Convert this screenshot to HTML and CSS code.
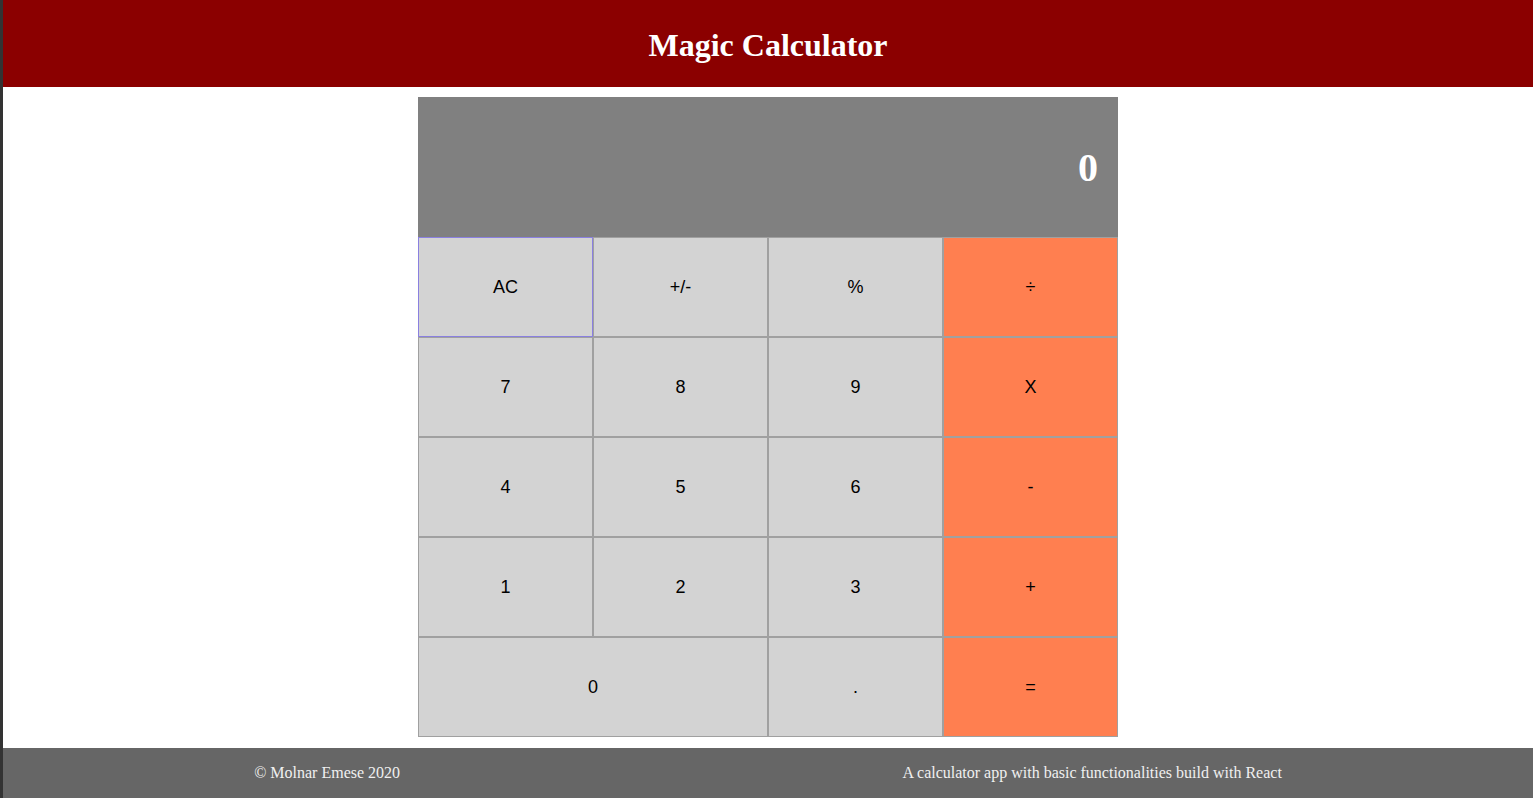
FILE: index.html
```html
<!DOCTYPE html>
<html lang="en">
<head>
<meta charset="utf-8">
<title>Magic Calculator</title>
<link rel="stylesheet" href="styles.css">
</head>
<body>
<div class="page">
  <header class="header">
    <h1 class="title">Magic Calculator</h1>
  </header>
  <main class="main">
    <div class="calculator">
      <div class="display">0</div>
      <div class="keys">
        <button class="key key-focus">AC</button>
        <button class="key">+/-</button>
        <button class="key">%</button>
        <button class="key key-op">÷</button>
        <button class="key">7</button>
        <button class="key">8</button>
        <button class="key">9</button>
        <button class="key key-op">X</button>
        <button class="key">4</button>
        <button class="key">5</button>
        <button class="key">6</button>
        <button class="key key-op">-</button>
        <button class="key">1</button>
        <button class="key">2</button>
        <button class="key">3</button>
        <button class="key key-op">+</button>
        <button class="key key-wide">0</button>
        <button class="key">.</button>
        <button class="key key-op">=</button>
      </div>
    </div>
  </main>
  <footer class="footer">
    <span class="footer-text">© Molnar Emese 2020</span>
    <span class="footer-text">A calculator app with basic functionalities build with React</span>
  </footer>
</div>
</body>
</html>
```

FILE: styles.css
```css
html, body {
  margin: 0;
  padding: 0;
  height: 100%;
}

body {
  background: #333333;
  font-family: "Liberation Serif", "Times New Roman", serif;
}

.page {
  margin-left: 3px;
  background: #ffffff;
  min-height: 100%;
  display: flex;
  flex-direction: column;
}

.header {
  background: #8b0000;
  height: 87px;
  display: flex;
  align-items: center;
  justify-content: center;
}

.title {
  margin: 0;
  padding-top: 2px;
  color: #ffffff;
  font-size: 32px;
  font-weight: bold;
  line-height: 1;
}

.main {
  display: flex;
  justify-content: center;
  padding: 10px 0 11px;
}

.calculator {
  width: 700px;
}

.display {
  height: 140px;
  background: #808080;
  color: #ffffff;
  font-family: "Liberation Serif", "Times New Roman", serif;
  font-weight: bold;
  font-size: 40px;
  display: flex;
  align-items: center;
  justify-content: flex-end;
  padding-right: 20px;
  box-sizing: border-box;
}

.keys {
  display: grid;
  grid-template-columns: repeat(4, 175px);
  grid-auto-rows: 100px;
}

.key {
  margin: 0;
  padding: 0;
  border: 1px solid #a0a0a0;
  background: #d3d3d3;
  color: #000000;
  font-family: "Liberation Sans", Arial, sans-serif;
  font-size: 18px;
  cursor: pointer;
}

.key-op {
  background: #ff7f50;
}

.key-wide {
  grid-column: span 2;
}

.key-focus {
  border-color: #8a80e0;
}

.footer {
  background: #666666;
  height: 50px;
  display: flex;
  align-items: center;
  justify-content: space-around;
}

.footer-text {
  color: #f0f0f0;
  font-size: 16px;
}
```
